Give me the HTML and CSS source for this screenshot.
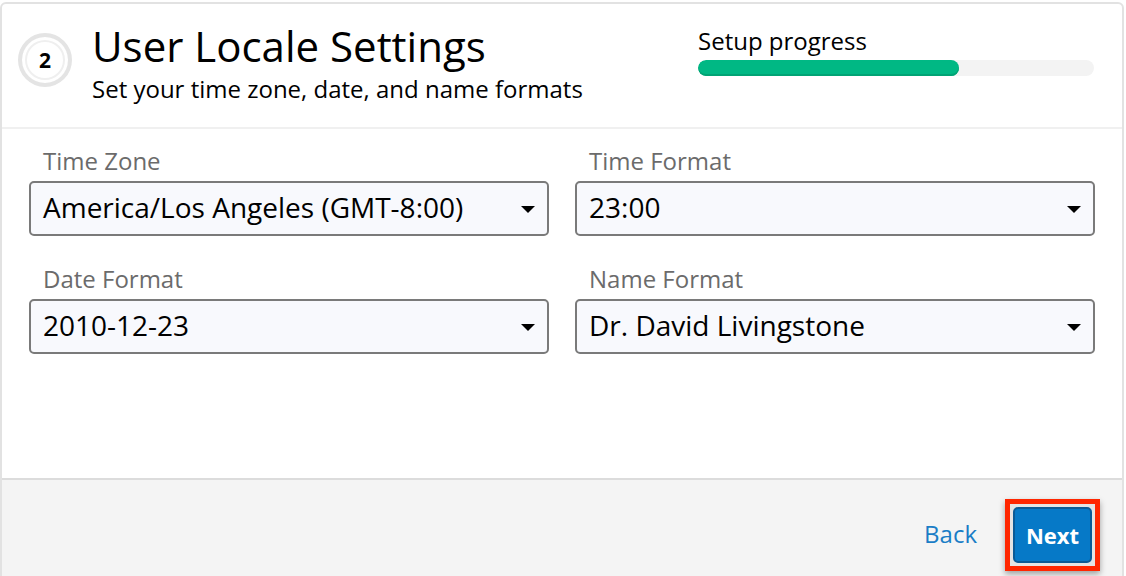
FILE: index.html
```html
<!DOCTYPE html>
<html lang="en">
<head>
<meta charset="utf-8">
<title>User Locale Settings</title>
<link rel="stylesheet" href="styles.css">
</head>
<body>
<div class="card">
  <header class="header">
    <div class="step"><span>2</span></div>
    <div class="titles">
      <h1 class="title">User Locale Settings</h1>
      <p class="subtitle">Set your time zone, date, and name formats</p>
    </div>
    <div class="progress">
      <div class="progress-label">Setup progress</div>
      <div class="progress-track"><div class="progress-fill" style="width:66%"></div></div>
    </div>
  </header>
  <main class="form">
    <div class="field">
      <label class="label">Time Zone</label>
      <div class="select"><span class="value">America/Los Angeles (GMT-8:00)</span><span class="caret"></span></div>
    </div>
    <div class="field">
      <label class="label">Time Format</label>
      <div class="select"><span class="value">23:00</span><span class="caret"></span></div>
    </div>
    <div class="field">
      <label class="label">Date Format</label>
      <div class="select"><span class="value">2010-12-23</span><span class="caret"></span></div>
    </div>
    <div class="field">
      <label class="label">Name Format</label>
      <div class="select"><span class="value">Dr. David Livingstone</span><span class="caret"></span></div>
    </div>
  </main>
  <footer class="footer">
    <a class="back" href="#">Back</a>
    <span class="highlight"><button class="next" type="button">Next</button></span>
  </footer>
</div>
</body>
</html>
```
FILE: styles.css
```css
* { box-sizing: border-box; }
html, body { margin: 0; padding: 0; background: #fff; }
body {
  font-family: "Open Sans", "DejaVu Sans", sans-serif;
  color: #000;
  overflow: hidden;
}
.card {
  margin-top: 2px;
  width: 1124px;
  height: 600px;
  border: 2px solid #e2e2e2;
  border-radius: 6px;
  display: flex;
  flex-direction: column;
  overflow: hidden;
}
.header {
  display: flex;
  align-items: flex-start;
  height: 125px;
  padding: 13px 28px 0 16px;
  border-bottom: 2px solid #f0f0f0;
}
.step {
  width: 54px;
  height: 54px;
  margin-top: 16px;
  border-radius: 50%;
  border: 4px solid #e4e4e4;
  box-shadow: inset 0 0 0 3px #fff, inset 0 0 0 5px #efefef;
  display: flex;
  align-items: center;
  justify-content: center;
  flex: none;
}
.step span {
  font-weight: 700;
  font-size: 21px;
  line-height: 1;
}
.titles { margin-left: 20px; flex: 1; }
.title {
  margin: 0;
  font-weight: 400;
  font-size: 42px;
  line-height: 58px;
}
.subtitle {
  margin: -1px 0 0;
  font-size: 24px;
  line-height: 30px;
}
.progress {
  width: 396px;
  flex: none;
  padding-top: 9px;
}
.progress-label {
  font-size: 24px;
  line-height: 30px;
}
.progress-track {
  margin-top: 4px;
  height: 16px;
  border-radius: 8px;
  background: #f3f3f3;
  overflow: hidden;
}
.progress-fill {
  height: 100%;
  border-radius: 8px;
  background: #00b884;
  box-shadow: inset 0 -2px 0 #01a374;
}
.form {
  height: 349px;
  padding: 17px 27px 0 27px;
  display: grid;
  grid-template-columns: 520px 520px;
  column-gap: 26px;
  row-gap: 28px;
  align-content: start;
}
.field { display: flex; flex-direction: column; }
.label {
  padding-left: 14px;
  font-size: 24px;
  line-height: 30px;
  color: #6b6b6b;
  margin-bottom: 5px;
}
.select {
  height: 55px;
  border: 2px solid #7a7a7a;
  border-radius: 5px;
  background: #f8f9fd;
  display: flex;
  align-items: center;
  padding: 0 12px 0 12px;
}
.value {
  flex: 1;
  font-size: 28px;
  line-height: 34px;
  padding-bottom: 4px;
  color: #000;
}
.caret {
  width: 0;
  height: 0;
  border-left: 7px solid transparent;
  border-right: 7px solid transparent;
  border-top: 7px solid #000;
  margin-top: 2px;
}
.footer {
  flex: 1;
  border-top: 2px solid #dcdcdc;
  background: #f4f4f4;
  display: flex;
  justify-content: flex-end;
  align-items: flex-start;
  padding: 19px 22px 0 0;
}
.back {
  margin-top: 19px;
  margin-right: 28px;
  font-size: 24px;
  line-height: 32px;
  color: #1a7dc6;
  text-decoration: none;
}
.highlight {
  display: flex;
  border: 5px solid #ff2600;
  padding: 3px;
  background: #e4e4e4;
  box-shadow: 0 3px 6px rgba(0,0,0,0.35);
}
.next {
  width: 79px;
  height: 56px;
  border: 2px solid #0a5a96;
  border-radius: 5px;
  background: #0679c7;
  color: #fff;
  font-family: "Open Sans", "DejaVu Sans", sans-serif;
  font-weight: 700;
  font-size: 22px;
  padding: 0;
}
```
